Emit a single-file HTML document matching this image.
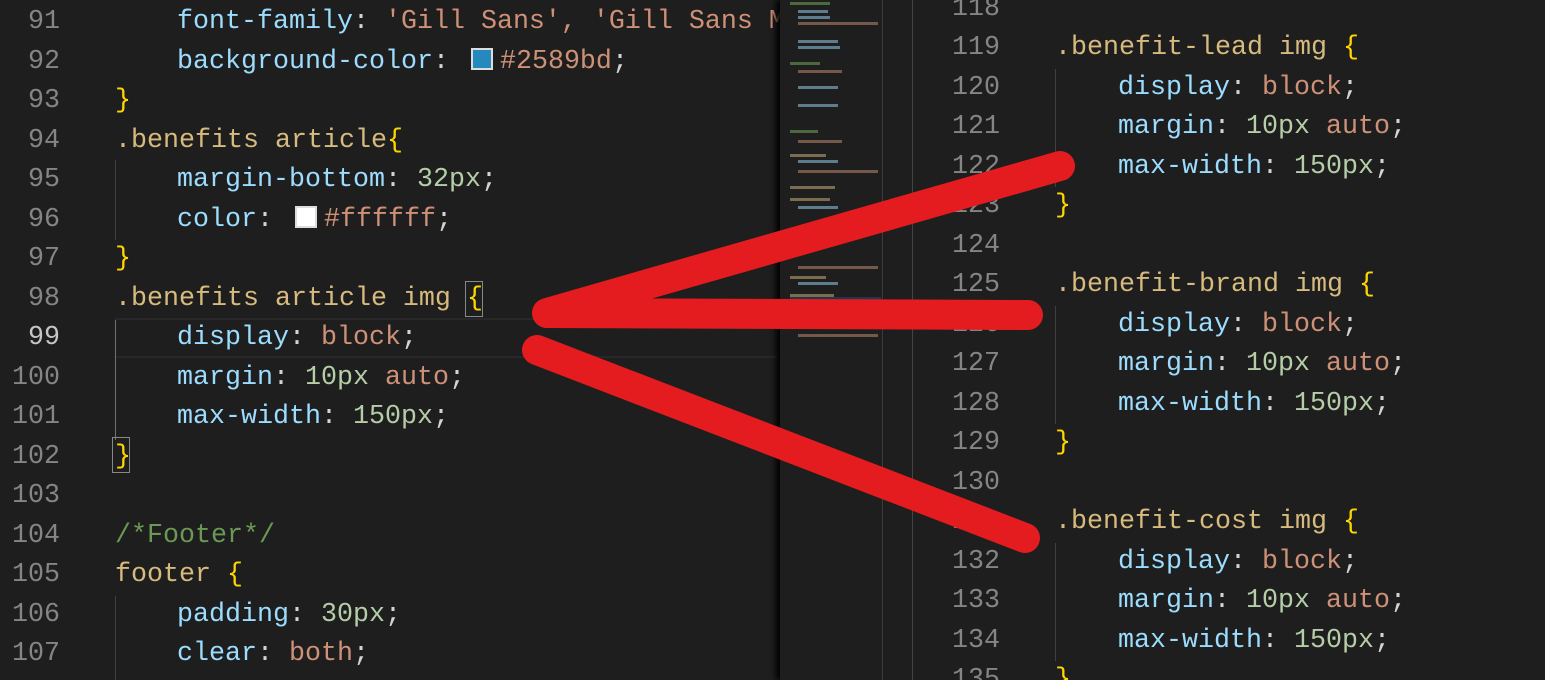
<!DOCTYPE html>
<html><head><meta charset="utf-8"><style>
html,body{margin:0;padding:0;background:#1e1e1e;width:1545px;height:680px;overflow:hidden;position:relative}
.ln{position:absolute;font-family:"Liberation Mono",monospace;font-size:26.67px;line-height:39.5px;height:39.5px;white-space:pre;color:#d4d4d4;margin-top:3px}
.n{color:#858585;text-align:right;width:60px}
.s{color:#d7ba7d}.p{color:#9cdcfe}.v{color:#ce9178}.m{color:#b5cea8}.b{color:#ffd700}.c{color:#6a9955}
.g{position:absolute;width:1px;background:#404040}
.sw{display:inline-block;width:18px;height:18px;border:2px solid #ddd;vertical-align:-2px;margin-right:7px;margin-left:6px}
.mm{position:absolute;height:3px}
</style></head><body>
<div style="position:absolute;left:115px;top:318px;width:665px;height:36px;border-top:2px solid #282828;border-bottom:2px solid #282828"></div>
<div class="g" style="left:115px;top:160px;height:80px"></div>
<div class="g" style="left:115px;top:320px;height:120px;background:#707070"></div>
<div class="g" style="left:115px;top:596px;height:87px"></div>
<div style="position:absolute;left:465px;top:281px;width:16px;height:34px;border:1px solid #888"></div>
<div style="position:absolute;left:112px;top:437px;width:16px;height:34px;border:1px solid #888"></div>

<div class="ln n" style="left:0;top:0">91</div><div class="ln" style="left:177px;top:0"><span class="p">font-family</span>: <span class="v">'Gill Sans', 'Gill Sans M</span></div>
<div class="ln n" style="left:0;top:40px">92</div><div class="ln" style="left:177px;top:40px"><span class="p">background-color</span>: <span class="sw" style="background:#2589bd"></span><span class="v">#2589bd</span>;</div>
<div class="ln n" style="left:0;top:79px">93</div><div class="ln" style="left:115px;top:79px"><span class="b">}</span></div>
<div class="ln n" style="left:0;top:119px">94</div><div class="ln" style="left:115px;top:119px"><span class="s">.benefits article</span><span class="b">{</span></div>
<div class="ln n" style="left:0;top:158px">95</div><div class="ln" style="left:177px;top:158px"><span class="p">margin-bottom</span>: <span class="m">32px</span>;</div>
<div class="ln n" style="left:0;top:198px">96</div><div class="ln" style="left:177px;top:198px"><span class="p">color</span>: <span class="sw" style="background:#fff"></span><span class="v">#ffffff</span>;</div>
<div class="ln n" style="left:0;top:237px">97</div><div class="ln" style="left:115px;top:237px"><span class="b">}</span></div>
<div class="ln n" style="left:0;top:277px">98</div><div class="ln" style="left:115px;top:277px"><span class="s">.benefits article img</span> <span class="b">{</span></div>
<div class="ln n" style="left:0;top:316px;color:#c6c6c6">99</div><div class="ln" style="left:177px;top:316px"><span class="p">display</span>: <span class="v">block</span>;</div>
<div class="ln n" style="left:0;top:356px">100</div><div class="ln" style="left:177px;top:356px"><span class="p">margin</span>: <span class="m">10px</span> <span class="v">auto</span>;</div>
<div class="ln n" style="left:0;top:395px">101</div><div class="ln" style="left:177px;top:395px"><span class="p">max-width</span>: <span class="m">150px</span>;</div>
<div class="ln n" style="left:0;top:435px">102</div><div class="ln" style="left:115px;top:435px"><span class="b">}</span></div>
<div class="ln n" style="left:0;top:474px">103</div>
<div class="ln n" style="left:0;top:514px">104</div><div class="ln" style="left:115px;top:514px"><span class="c">/*Footer*/</span></div>
<div class="ln n" style="left:0;top:553px">105</div><div class="ln" style="left:115px;top:553px"><span class="s">footer</span> <span class="b">{</span></div>
<div class="ln n" style="left:0;top:593px">106</div><div class="ln" style="left:177px;top:593px"><span class="p">padding</span>: <span class="m">30px</span>;</div>
<div class="ln n" style="left:0;top:632px">107</div><div class="ln" style="left:177px;top:632px"><span class="p">clear</span>: <span class="v">both</span>;</div>

<div style="position:absolute;left:780px;top:0;width:102px;height:680px;background:#1e1e1e;box-shadow:-4px 0 6px #000"></div>
<div style="position:absolute;left:790px;top:297px;width:91px;height:5px;background:#264f78;opacity:.5"></div>
<div style="position:absolute;left:882px;top:0;width:1px;height:680px;background:#3c3c3c"></div>
<div style="position:absolute;left:912px;top:0;width:1px;height:680px;background:#444"></div>

<div class="g" style="left:1055px;top:69px;height:118px"></div>
<div class="g" style="left:1055px;top:306px;height:118px"></div>
<div class="g" style="left:1055px;top:543px;height:118px"></div>
<div class="ln n" style="left:940px;top:-13px">118</div>
<div class="ln n" style="left:940px;top:26px">119</div><div class="ln" style="left:1055px;top:26px"><span class="s">.benefit-lead img</span> <span class="b">{</span></div>
<div class="ln n" style="left:940px;top:66px">120</div><div class="ln" style="left:1118px;top:66px"><span class="p">display</span>: <span class="v">block</span>;</div>
<div class="ln n" style="left:940px;top:105px">121</div><div class="ln" style="left:1118px;top:105px"><span class="p">margin</span>: <span class="m">10px</span> <span class="v">auto</span>;</div>
<div class="ln n" style="left:940px;top:145px">122</div><div class="ln" style="left:1118px;top:145px"><span class="p">max-width</span>: <span class="m">150px</span>;</div>
<div class="ln n" style="left:940px;top:184px">123</div><div class="ln" style="left:1055px;top:184px"><span class="b">}</span></div>
<div class="ln n" style="left:940px;top:224px">124</div>
<div class="ln n" style="left:940px;top:263px">125</div><div class="ln" style="left:1055px;top:263px"><span class="s">.benefit-brand img</span> <span class="b">{</span></div>
<div class="ln n" style="left:940px;top:303px">126</div><div class="ln" style="left:1118px;top:303px"><span class="p">display</span>: <span class="v">block</span>;</div>
<div class="ln n" style="left:940px;top:342px">127</div><div class="ln" style="left:1118px;top:342px"><span class="p">margin</span>: <span class="m">10px</span> <span class="v">auto</span>;</div>
<div class="ln n" style="left:940px;top:382px">128</div><div class="ln" style="left:1118px;top:382px"><span class="p">max-width</span>: <span class="m">150px</span>;</div>
<div class="ln n" style="left:940px;top:421px">129</div><div class="ln" style="left:1055px;top:421px"><span class="b">}</span></div>
<div class="ln n" style="left:940px;top:461px">130</div>
<div class="ln n" style="left:940px;top:500px">131</div><div class="ln" style="left:1055px;top:500px"><span class="s">.benefit-cost img</span> <span class="b">{</span></div>
<div class="ln n" style="left:940px;top:540px">132</div><div class="ln" style="left:1118px;top:540px"><span class="p">display</span>: <span class="v">block</span>;</div>
<div class="ln n" style="left:940px;top:579px">133</div><div class="ln" style="left:1118px;top:579px"><span class="p">margin</span>: <span class="m">10px</span> <span class="v">auto</span>;</div>
<div class="ln n" style="left:940px;top:619px">134</div><div class="ln" style="left:1118px;top:619px"><span class="p">max-width</span>: <span class="m">150px</span>;</div>
<div class="ln n" style="left:940px;top:658px">135</div><div class="ln" style="left:1055px;top:658px"><span class="b">}</span></div>

<div class="mm" style="left:790px;top:2px;width:40px;background:#6a9955;opacity:.6"></div>
<div class="mm" style="left:798px;top:10px;width:30px;background:#9cdcfe;opacity:.5"></div>
<div class="mm" style="left:798px;top:16px;width:32px;background:#9cdcfe;opacity:.5"></div>
<div class="mm" style="left:798px;top:22px;width:80px;background:#ce9178;opacity:.5"></div>
<div class="mm" style="left:798px;top:40px;width:40px;background:#9cdcfe;opacity:.5"></div>
<div class="mm" style="left:798px;top:46px;width:42px;background:#9cdcfe;opacity:.5"></div>
<div class="mm" style="left:790px;top:62px;width:30px;background:#6a9955;opacity:.6"></div>
<div class="mm" style="left:798px;top:70px;width:44px;background:#ce9178;opacity:.5"></div>
<div class="mm" style="left:798px;top:86px;width:40px;background:#9cdcfe;opacity:.5"></div>
<div class="mm" style="left:798px;top:104px;width:40px;background:#9cdcfe;opacity:.5"></div>
<div class="mm" style="left:790px;top:130px;width:28px;background:#6a9955;opacity:.6"></div>
<div class="mm" style="left:798px;top:140px;width:44px;background:#ce9178;opacity:.5"></div>
<div class="mm" style="left:790px;top:154px;width:36px;background:#d7ba7d;opacity:.5"></div>
<div class="mm" style="left:798px;top:160px;width:40px;background:#9cdcfe;opacity:.5"></div>
<div class="mm" style="left:798px;top:170px;width:80px;background:#ce9178;opacity:.5"></div>
<div class="mm" style="left:790px;top:186px;width:45px;background:#d7ba7d;opacity:.5"></div>
<div class="mm" style="left:790px;top:198px;width:40px;background:#d7ba7d;opacity:.5"></div>
<div class="mm" style="left:798px;top:206px;width:40px;background:#9cdcfe;opacity:.5"></div>
<div class="mm" style="left:798px;top:266px;width:80px;background:#ce9178;opacity:.5"></div>
<div class="mm" style="left:790px;top:276px;width:36px;background:#d7ba7d;opacity:.5"></div>
<div class="mm" style="left:798px;top:282px;width:40px;background:#9cdcfe;opacity:.5"></div>
<div class="mm" style="left:790px;top:294px;width:44px;background:#d7ba7d;opacity:.5"></div>
<div class="mm" style="left:798px;top:334px;width:80px;background:#ce9178;opacity:.5"></div>

<svg style="position:absolute;left:0;top:0" width="1545" height="680">
<g fill="none" stroke="#e51c1f" stroke-width="30" stroke-linecap="round" stroke-linejoin="round">
<polyline points="1060,166 547,313 1028,315"/>
<line x1="537" y1="350" x2="1025" y2="538"/>
</g></svg>
</body></html>
